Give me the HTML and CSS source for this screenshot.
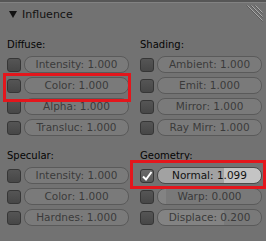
FILE: index.html
```html
<!DOCTYPE html>
<html lang="en">

<head>
    <meta charset="UTF-8">
    <meta name="viewport" content="width=device-width, initial-scale=1.0">
    <title>Influence</title>
    <link rel="stylesheet" href="styles.css">
</head>

<body>
    <div class="panel">

        <!--Header-->
        <div class="panel-header">
            <svg class="arrow" width="8" height="7" viewBox="0 0 8 7"><polygon points="0,0 8,0 4,7" fill="#111"/></svg>
            <span class="panel-title">Influence</span>
            <svg class="grip" width="20" height="18" viewBox="0 0 20 18">
                <g stroke="#5a5a5a" stroke-width="1">
                    <line x1="2.5" y1="1.5" x2="18.5" y2="17.5"/>
                    <line x1="6.5" y1="1.5" x2="18.5" y2="13.5"/>
                    <line x1="10.5" y1="1.5" x2="18.5" y2="9.5"/>
                </g>
                <g stroke="#a8a8a8" stroke-width="1">
                    <line x1="3.5" y1="1.5" x2="18.5" y2="16.5"/>
                    <line x1="7.5" y1="1.5" x2="18.5" y2="12.5"/>
                    <line x1="11.5" y1="1.5" x2="18.5" y2="8.5"/>
                </g>
            </svg>
        </div>

        <!--Diffuse / Shading-->
        <div class="group">
            <div class="col">
                <p class="label">Diffuse:</p>
                <div class="row"><span class="check"></span><div class="slider">Intensity: 1.000</div></div>
                <div class="row"><span class="check"></span><div class="slider">Color: 1.000</div></div>
                <div class="row"><span class="check"></span><div class="slider">Alpha: 1.000</div></div>
                <div class="row"><span class="check"></span><div class="slider">Transluc: 1.000</div></div>
            </div>
            <div class="col">
                <p class="label">Shading:</p>
                <div class="row"><span class="check"></span><div class="slider">Ambient: 1.000</div></div>
                <div class="row"><span class="check"></span><div class="slider">Emit: 1.000</div></div>
                <div class="row"><span class="check"></span><div class="slider">Mirror: 1.000</div></div>
                <div class="row"><span class="check"></span><div class="slider">Ray Mirr: 1.000</div></div>
            </div>
        </div>

        <!--Specular / Geometry-->
        <div class="group second">
            <div class="col">
                <p class="label">Specular:</p>
                <div class="row"><span class="check"></span><div class="slider">Intensity: 1.000</div></div>
                <div class="row"><span class="check"></span><div class="slider">Color: 1.000</div></div>
                <div class="row"><span class="check"></span><div class="slider">Hardnes: 1.000</div></div>
            </div>
            <div class="col">
                <p class="label">Geometry:</p>
                <div class="row">
                    <span class="check checked">
                        <svg width="12" height="12" viewBox="0 0 12 12"><path d="M2 6.5 L5 9.5 L10.5 2" fill="none" stroke="#fff" stroke-width="2"/></svg>
                    </span>
                    <div class="slider active" style="--fill: 66px">Normal: 1.099</div>
                </div>
                <div class="row"><span class="check"></span><div class="slider filled" style="--fill: 8px">Warp: 0.000</div></div>
                <div class="row"><span class="check"></span><div class="slider filled" style="--fill: 66px">Displace: 0.200</div></div>
            </div>
        </div>

        <!--Highlight marks-->
        <div class="mark mark-color"></div>
        <div class="mark mark-normal"></div>
    </div>
</body>

</html>
```

FILE: styles.css
```css
body {
    margin: 0;
    background-color: #727272;
    font-family: "DejaVu Sans", sans-serif;
}

.panel {
    position: relative;
    width: 266px;
    height: 241px;
    overflow: hidden;
}

.panel-header {
    display: flex;
    align-items: flex-start;
    height: 26px;
    border-top: 2px solid #565656;
    box-shadow: inset 0 1px 0 #828282;
    padding-left: 9px;
    box-sizing: content-box;
}

.arrow {
    margin-top: 9px;
    margin-right: 5px;
}

.panel-title {
    margin-top: 6px;
    font-size: 11px;
    line-height: 13px;
    color: #111;
}

.grip {
    margin-left: auto;
    margin-top: 2px;
    margin-right: 2px;
}

.group {
    display: grid;
    grid-template-columns: 133px 133px;
    padding-top: 11px;
}

.second {
    padding-top: 14px;
}

.col {
    padding-left: 7px;
    display: flex;
    flex-direction: column;
    gap: 4px;
}

.label {
    margin: 0;
    margin-bottom: 1px;
    font-size: 10px;
    line-height: 12px;
    color: #050505;
}

.row {
    display: flex;
    align-items: center;
    height: 17px;
}

.check {
    width: 14px;
    height: 14px;
    box-sizing: border-box;
    border: 1px solid #363636;
    border-radius: 3px;
    background: linear-gradient(#555555, #474747);
    margin-right: 3px;
    display: flex;
    align-items: center;
    justify-content: center;
}

.checked {
    background: linear-gradient(#6a6a6a, #585858);
}

.slider {
    width: 105px;
    height: 17px;
    box-sizing: border-box;
    border: 1px solid #5a5a5a;
    border-radius: 8px;
    background-color: #7a7a7a;
    font-size: 10.5px;
    line-height: 15px;
    text-align: center;
    color: #3a3a3a;
    white-space: nowrap;
}

.filled {
    background: linear-gradient(to right, #838383 0 var(--fill), #797979 var(--fill));
}

.active {
    border-color: #4a4a4a;
    background: linear-gradient(to right, #a2a2a2 0 var(--fill), #c4c4c4 var(--fill));
    color: #111;
}

.mark {
    position: absolute;
    border: 3px solid #e3161c;
    box-sizing: border-box;
}

.mark-color {
    left: 3px;
    top: 73px;
    width: 128px;
    height: 29px;
}

.mark-normal {
    left: 130px;
    top: 160px;
    width: 136px;
    height: 29px;
}
```
